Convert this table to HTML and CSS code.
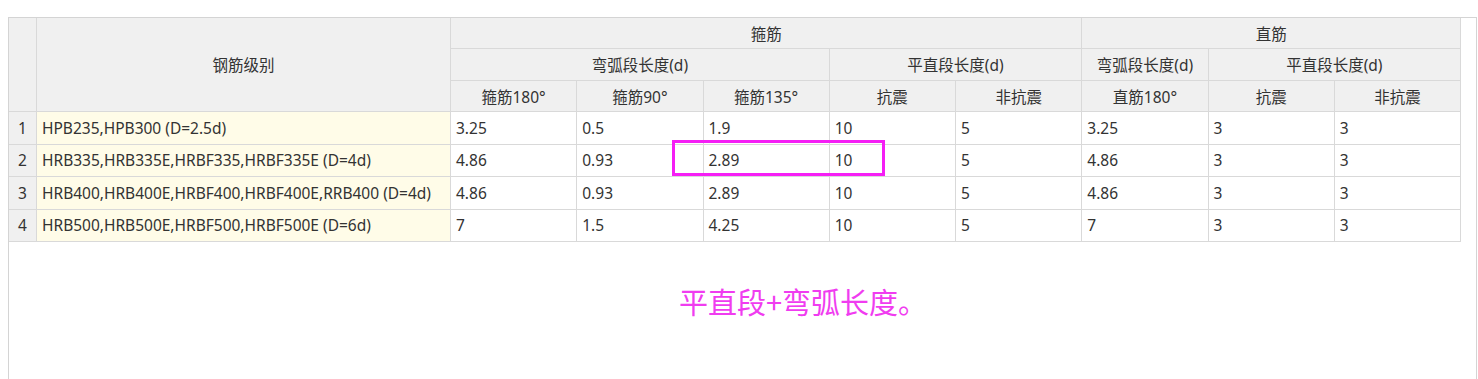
FILE: index.html
```html
<!DOCTYPE html>
<html lang="zh-CN">
<head>
<meta charset="utf-8">
<title>钢筋级别</title>
<link rel="stylesheet" href="styles.css">
</head>
<body>
<div class="panel">
  <table class="grid">
    <colgroup>
      <col class="c-num">
      <col class="c-name">
      <col class="c-val"><col class="c-val"><col class="c-val"><col class="c-val">
      <col class="c-val"><col class="c-val"><col class="c-val"><col class="c-val">
    </colgroup>
    <thead>
      <tr class="hr1">
        <th rowspan="3"></th>
        <th rowspan="3">钢筋级别</th>
        <th colspan="5">箍筋</th>
        <th colspan="3">直筋</th>
      </tr>
      <tr class="hr2">
        <th colspan="3">弯弧段长度(d)</th>
        <th colspan="2">平直段长度(d)</th>
        <th>弯弧段长度(d)</th>
        <th colspan="2">平直段长度(d)</th>
      </tr>
      <tr class="hr3">
        <th>箍筋180°</th>
        <th>箍筋90°</th>
        <th>箍筋135°</th>
        <th>抗震</th>
        <th>非抗震</th>
        <th>直筋180°</th>
        <th>抗震</th>
        <th>非抗震</th>
      </tr>
    </thead>
    <tbody>
      <tr>
        <td class="num">1</td><td class="name">HPB235,HPB300 (D=2.5d)</td>
        <td>3.25</td><td>0.5</td><td>1.9</td><td>10</td><td>5</td><td>3.25</td><td>3</td><td>3</td>
      </tr>
      <tr>
        <td class="num">2</td><td class="name">HRB335,HRB335E,HRBF335,HRBF335E (D=4d)</td>
        <td>4.86</td><td>0.93</td><td>2.89</td><td>10</td><td>5</td><td>4.86</td><td>3</td><td>3</td>
      </tr>
      <tr>
        <td class="num">3</td><td class="name">HRB400,HRB400E,HRBF400,HRBF400E,RRB400 (D=4d)</td>
        <td>4.86</td><td>0.93</td><td>2.89</td><td>10</td><td>5</td><td>4.86</td><td>3</td><td>3</td>
      </tr>
      <tr>
        <td class="num">4</td><td class="name">HRB500,HRB500E,HRBF500,HRBF500E (D=6d)</td>
        <td>7</td><td>1.5</td><td>4.25</td><td>10</td><td>5</td><td>7</td><td>3</td><td>3</td>
      </tr>
    </tbody>
  </table>
  <div class="note">平直段+弯弧长度。</div>
  <div class="highlight"></div>
</div>
</body>
</html>
```

FILE: styles.css
```css
html, body {
  margin: 0;
  padding: 0;
  background: #ffffff;
  overflow: hidden;
}

body {
  font-family: "Noto Sans", "Noto Sans CJK SC", sans-serif;
  color: #333333;
}

.panel {
  position: relative;
  margin: 17px 0 0 8px;
  width: 1467px;
  height: 362px;
  border: 1px solid #d4d4d4;
  border-bottom: none;
}

.grid {
  border-collapse: separate;
  border-spacing: 0;
  table-layout: fixed;
  width: 1452px;
  font-size: 15.5px;
}

.c-num { width: 28px; }
.c-name { width: 414px; }
.c-val { width: 126.25px; }

.grid th,
.grid td {
  border-right: 1px solid #d9d9d9;
  border-bottom: 1px solid #d9d9d9;
  padding: 0 5px;
  white-space: nowrap;
  overflow: hidden;
  box-sizing: border-box;
}

.grid th {
  background: #f0f0f0;
  font-weight: normal;
  text-align: center;
  color: #333333;
}

.hr1 { height: 31px; }
.hr2 { height: 32px; }
.hr3 { height: 31px; }

.grid tbody tr { height: 32.5px; }

.grid td {
  text-align: left;
  background: #ffffff;
}

.grid td.num {
  background: #f0f0f0;
  text-align: center;
  padding: 0;
}

.grid td.name {
  background: #fffce8;
}

.note {
  margin-top: 39px;
  padding-left: 670px;
  font-family: "Noto Sans CJK SC", sans-serif;
  font-size: 29px;
  line-height: 40px;
  color: #f03cf0;
}

.highlight {
  position: absolute;
  left: 663px;
  top: 122px;
  width: 213px;
  height: 36px;
  box-sizing: border-box;
  border: 3px solid #f51ef5;
}
```
